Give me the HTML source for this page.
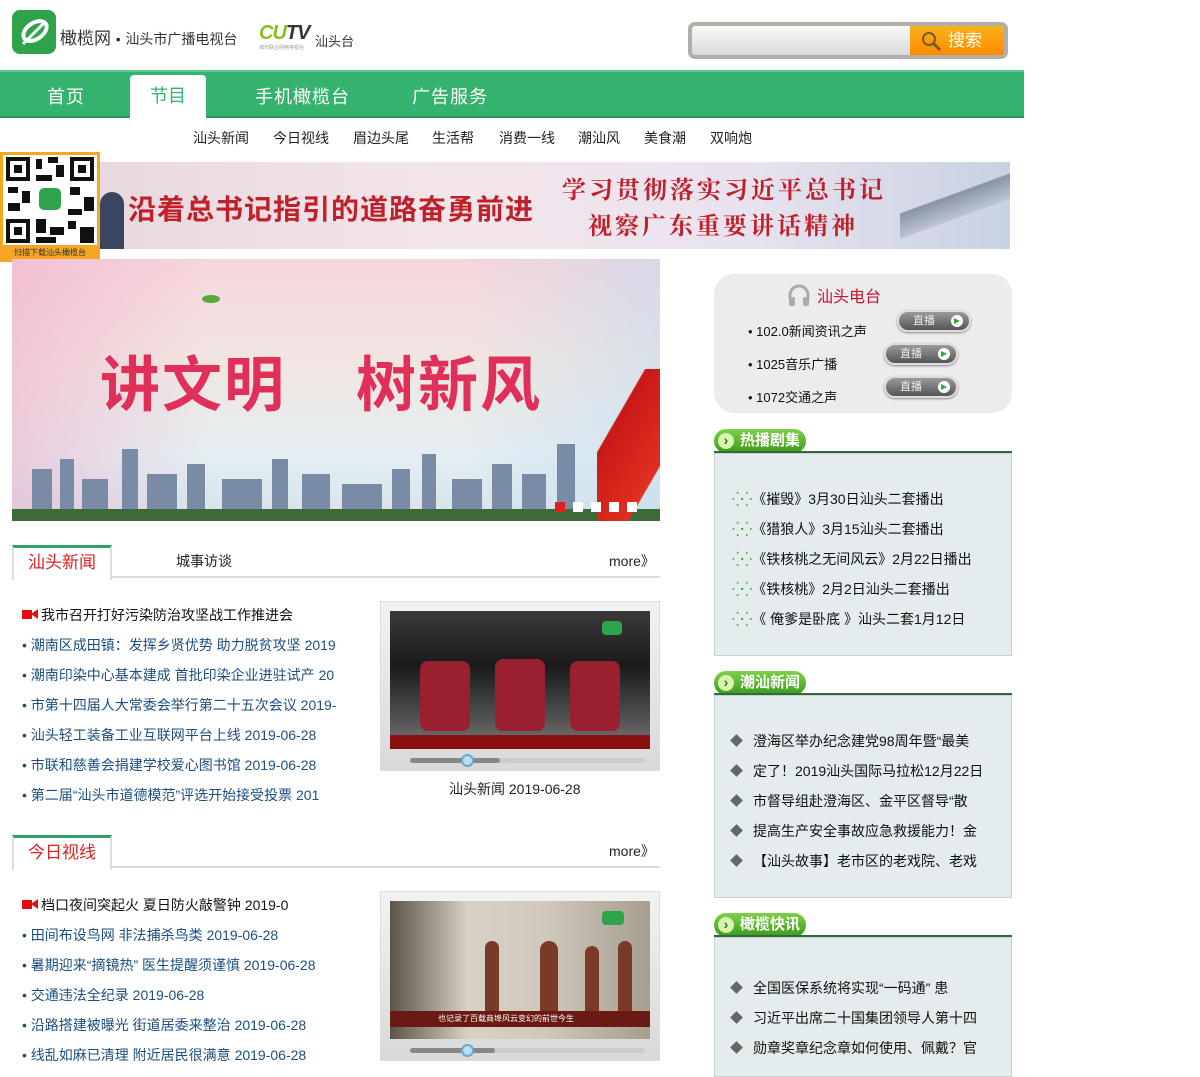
<!DOCTYPE html>
<html><head><meta charset="utf-8">
<style>
*{margin:0;padding:0;box-sizing:border-box}
body{width:1200px;height:1063px;overflow:hidden;background:#fff;font-family:"Liberation Sans","Noto Sans CJK SC",sans-serif;position:relative;color:#222}
.a{position:absolute}
.nav{left:0;top:70px;width:1024px;height:48px;background:#35b26c;border-top:2px solid #5cc58a;border-bottom:2px solid #2a9a58}
.nav span{position:absolute;top:11px;color:#fff;font-size:18px;letter-spacing:1px}
.sub span{position:absolute;top:128px;font-size:14px;color:#222}
.ll{font-size:14px;color:#1c4f80;white-space:nowrap;left:22px}
.rl{font-size:14px;color:#111;white-space:nowrap;left:732px}
.rl b{display:inline-block;width:9px;height:9px;background:#666;transform:rotate(45deg);margin-right:12px;vertical-align:1px}
.hd{height:24px;background:linear-gradient(#7fd04a,#3c9a1c);border-radius:12px;color:#fff;font-weight:bold;font-size:15px;padding-left:26px;line-height:24px;left:714px}
.hd:before{content:"›";position:absolute;left:4px;top:4px;width:16px;height:16px;border-radius:8px;background:#d8f5b0;color:#2a7a10;font-size:14px;line-height:15px;text-align:center}
.hl{left:714px;width:298px;height:2px;background:#2f6a3a}
.box{left:714px;width:298px;background:#e4eced;border:1px solid #c8d2d3}
.btn{width:74px;height:22px;border-radius:11px;background:linear-gradient(#9a9a9a,#555);border:2px solid #ddd;box-shadow:0 1px 2px #888;color:#eee;font-size:11px;line-height:18px;padding-left:14px}
.btn:after{content:"";position:absolute;right:6px;top:3px;width:12px;height:12px;border-radius:6px;background:#fff}
.btn i{position:absolute;right:9px;top:6px;border-left:6px solid #3a3;border-top:3px solid transparent;border-bottom:3px solid transparent;z-index:2}
.tabh{left:12px;width:648px;height:33px;border-bottom:2px solid #ddd}
.tab1{left:12px;width:100px;height:35px;border:2px solid #ddd;border-top:3px solid #2fa06a;border-bottom:none;background:#fff;color:#d22;font-size:17px;text-align:center;line-height:30px}
.vid{width:280px;height:170px;background:linear-gradient(#f2f2f2,#d9d9d9);border:1px solid #ddd}
.bar{height:5px;background:#888;border-radius:3px}
</style></head><body>
<div class="a" style="left:12px;top:10px;width:44px;height:44px;background:#2ea34a;border-radius:8px"></div>
<svg class="a" style="left:17px;top:16px" width="34" height="32"><ellipse cx="18" cy="15" rx="13" ry="8" transform="rotate(-35 18 15)" fill="none" stroke="#fff" stroke-width="4"/><path d="M6 28 L28 6" stroke="#fff" stroke-width="3"/></svg>
<div class="a" style="left:60px;top:24px;font-size:17px;color:#333">橄榄网 <span style="font-size:14px">•</span> <span style="font-size:14px;color:#333">汕头市广播电视台</span></div>
<div class="a" style="left:259px;top:22px;font-size:20px;font-weight:bold;font-style:italic;color:#8dbd1e;letter-spacing:-1px">CU<span style="color:#334">TV</span></div>
<div class="a" style="left:259px;top:44px;font-size:5px;color:#999">城市联合网络电视台</div>
<div class="a" style="left:315px;top:31px;font-size:13px;color:#333">汕头台</div>
<div class="a" style="left:688px;top:22px;width:320px;height:37px;border:4px solid #b3aea8;border-radius:7px;background:linear-gradient(#fafafa,#d9d9d9);overflow:hidden">
<div class="a" style="right:0;top:0;width:94px;height:29px;background:linear-gradient(#f9b21b,#ff8a00);color:#fff;font-size:17px;line-height:29px;padding-left:38px">搜索</div>
<svg class="a" style="right:60px;top:4px" width="24" height="22"><circle cx="9" cy="9" r="6" fill="none" stroke="#7a5a20" stroke-width="2"/><path d="M13 13 L20 20" stroke="#7a5a20" stroke-width="3"/></svg>
</div>
<div class="a nav"><span style="left:47px">首页</span><span style="left:255px">手机橄榄台</span><span style="left:412px">广告服务</span></div>
<div class="a" style="left:130px;top:75px;width:76px;height:46px;background:#fff;border-radius:4px 4px 0 0;color:#35b26c;font-size:18px;text-align:center;line-height:42px">节目</div>
<div class="sub"><span style="left:193px">汕头新闻</span><span style="left:273px">今日视线</span><span style="left:353px">眉边头尾</span><span style="left:432px">生活帮</span><span style="left:499px">消费一线</span><span style="left:578px">潮汕风</span><span style="left:644px">美食潮</span><span style="left:710px">双响炮</span></div>
<div class="a" style="left:100px;top:162px;width:910px;height:87px;background:linear-gradient(90deg,#e8d9e0,#f3e6ea 40%,#e9e3ef 70%,#c9d2e2);overflow:hidden">
<div class="a" style="left:0;top:30px;width:24px;height:57px;background:#3a4560;border-radius:12px 12px 0 0"></div>
<div class="a" style="left:28px;top:26px;font-size:28px;font-weight:bold;color:#c0202a;letter-spacing:1px">沿着总书记指引的道路奋勇前进</div>
<div class="a" style="left:462px;top:8px;font-size:24px;font-weight:bold;color:#c0202a;font-family:'Noto Serif CJK SC',serif;letter-spacing:3px">学习贯彻落实习近平总书记</div>
<div class="a" style="left:488px;top:44px;font-size:24px;font-weight:bold;color:#c0202a;font-family:'Noto Serif CJK SC',serif;letter-spacing:3px">视察广东重要讲话精神</div>
<div class="a" style="left:800px;top:0;width:110px;height:87px;background:linear-gradient(160deg,transparent 40%,#8a93a6 41%,#bcc4d3 60%,transparent 61%)"></div>
</div>
<div class="a" style="left:0;top:152px;width:100px;height:110px;background:#f5a623"></div>
<div class="a" style="left:3px;top:155px;width:94px;height:90px;background:#fff"></div>
<svg class="a" style="left:6px;top:157px" width="88" height="86"><g fill="#111"><rect x="0" y="0" width="24" height="24"/><rect x="64" y="0" width="24" height="24"/><rect x="0" y="62" width="24" height="24"/></g><g fill="#fff"><rect x="4" y="4" width="16" height="16"/><rect x="68" y="4" width="16" height="16"/><rect x="4" y="66" width="16" height="16"/></g><g fill="#111"><rect x="8" y="8" width="8" height="8"/><rect x="72" y="8" width="8" height="8"/><rect x="8" y="70" width="8" height="8"/><rect x="30" y="2" width="6" height="10"/><rect x="42" y="0" width="10" height="6"/><rect x="30" y="18" width="16" height="6"/><rect x="2" y="30" width="10" height="6"/><rect x="16" y="34" width="8" height="12"/><rect x="2" y="46" width="12" height="8"/><rect x="64" y="30" width="10" height="8"/><rect x="78" y="40" width="10" height="14"/><rect x="62" y="52" width="14" height="6"/><rect x="30" y="62" width="10" height="14"/><rect x="44" y="70" width="14" height="8"/><rect x="62" y="64" width="8" height="8"/><rect x="74" y="70" width="14" height="16"/><rect x="50" y="8" width="8" height="12"/><rect x="30" y="80" width="20" height="6"/></g><rect x="33" y="31" width="22" height="22" rx="5" fill="#2ea34a"/></svg>
<div class="a" style="left:0;top:247px;width:100px;font-size:8px;color:#333;text-align:center">扫描下载汕头橄榄台</div>
<div class="a" style="left:80px;top:262px;width:20px;height:9px;border:1px solid #ccc;font-size:7px;color:#666;background:#fff;text-align:center;line-height:7px">关闭</div>
<div class="a" style="left:12px;top:259px;width:648px;height:262px;background:linear-gradient(180deg,#f6d5dc 0%,#f1e6e2 40%,#e4eef2 75%,#d7e3ea 100%);overflow:hidden">
<div class="a" style="left:0;top:0;width:648px;height:262px;background:linear-gradient(90deg,rgba(240,170,200,.5),transparent 30%,transparent 70%,rgba(190,220,240,.5))"></div>
<div class="a" style="left:88px;top:78px;font-size:60px;font-weight:bold;color:#e0305a;letter-spacing:2px">讲文明</div>
<div class="a" style="left:344px;top:78px;font-size:60px;font-weight:bold;color:#e0305a;letter-spacing:2px">树新风</div>
<div class="a" style="left:190px;top:36px;width:18px;height:8px;background:#5aa83a;border-radius:50%"></div>
<svg class="a" style="left:0;top:170px" width="648" height="92"><g fill="#7a8ba6"><rect x="20" y="40" width="20" height="52"/><rect x="48" y="30" width="14" height="62"/><rect x="70" y="50" width="26" height="42"/><rect x="110" y="20" width="16" height="72"/><rect x="135" y="45" width="30" height="47"/><rect x="175" y="35" width="18" height="57"/><rect x="210" y="50" width="40" height="42"/><rect x="260" y="30" width="16" height="62"/><rect x="290" y="45" width="28" height="47"/><rect x="330" y="55" width="40" height="37"/><rect x="380" y="40" width="18" height="52"/><rect x="410" y="25" width="14" height="67"/><rect x="440" y="50" width="30" height="42"/><rect x="480" y="35" width="20" height="57"/><rect x="510" y="45" width="24" height="47"/><rect x="545" y="15" width="18" height="77"/></g><rect x="0" y="80" width="648" height="12" fill="#3c6a3a"/></svg>
<div class="a" style="left:585px;top:110px;width:70px;height:152px;background:linear-gradient(120deg,transparent 30%,#c81818 31%,#e03020 75%,transparent 76%);border-radius:50% 0 0 0"></div>
<div class="a" style="left:543px;top:243px;width:10px;height:10px;background:#e02020"></div>
<div class="a" style="left:561px;top:243px;width:10px;height:10px;background:#fff"></div>
<div class="a" style="left:579px;top:243px;width:10px;height:10px;background:#fff"></div>
<div class="a" style="left:597px;top:243px;width:10px;height:10px;background:#fff"></div>
<div class="a" style="left:615px;top:243px;width:10px;height:10px;background:#fff"></div>
</div>
<div class="a" style="left:714px;top:274px;width:298px;height:139px;background:#ececec;border-radius:20px"></div>
<svg class="a" style="left:787px;top:283px" width="24" height="24"><path d="M3 16 V12 A9 9 0 0 1 21 12 V16" fill="none" stroke="#aaa" stroke-width="3"/><rect x="2" y="14" width="6" height="9" rx="2" fill="#aaa"/><rect x="16" y="14" width="6" height="9" rx="2" fill="#aaa"/></svg>
<div class="a" style="left:817px;top:283px;font-size:16px;color:#c8102e">汕头电台</div>
<div class="a" style="left:748px;top:321px;font-size:13px;color:#111">• 102.0新闻资讯之声</div>
<div class="a" style="left:748px;top:354px;font-size:13px;color:#111">• 1025音乐广播</div>
<div class="a" style="left:748px;top:387px;font-size:13px;color:#111">• 1072交通之声</div>
<div class="a btn" style="left:897px;top:310px">直播<i></i></div>
<div class="a btn" style="left:884px;top:343px">直播<i></i></div>
<div class="a btn" style="left:884px;top:376px">直播<i></i></div>
<div class="a hd" style="top:429px;width:92px">热播剧集</div><div class="a hl" style="top:451px"></div>
<div class="a box" style="top:453px;height:203px"></div>
<div class="a rl" style="top:489px"><span style="color:#3a3;letter-spacing:-2px">⁛⁛ </span>《摧毁》3月30日汕头二套播出</div>
<div class="a rl" style="top:519px"><span style="color:#3a3;letter-spacing:-2px">⁛⁛ </span>《猎狼人》3月15汕头二套播出</div>
<div class="a rl" style="top:549px"><span style="color:#3a3;letter-spacing:-2px">⁛⁛ </span>《铁核桃之无间风云》2月22日播出</div>
<div class="a rl" style="top:579px"><span style="color:#3a3;letter-spacing:-2px">⁛⁛ </span>《铁核桃》2月2日汕头二套播出</div>
<div class="a rl" style="top:609px"><span style="color:#3a3;letter-spacing:-2px">⁛⁛ </span>《 俺爹是卧底 》汕头二套1月12日</div>
<div class="a hd" style="top:671px;width:92px">潮汕新闻</div><div class="a hl" style="top:693px"></div>
<div class="a box" style="top:695px;height:203px"></div>
<div class="a rl" style="top:731px"><b></b>澄海区举办纪念建党98周年暨“最美</div>
<div class="a rl" style="top:761px"><b></b>定了！2019汕头国际马拉松12月22日</div>
<div class="a rl" style="top:791px"><b></b>市督导组赴澄海区、金平区督导“散</div>
<div class="a rl" style="top:821px"><b></b>提高生产安全事故应急救援能力！金</div>
<div class="a rl" style="top:851px"><b></b>【汕头故事】老市区的老戏院、老戏</div>
<div class="a hd" style="top:913px;width:92px">橄榄快讯</div><div class="a hl" style="top:935px"></div>
<div class="a box" style="top:937px;height:140px"></div>
<div class="a rl" style="top:978px"><b></b>全国医保系统将实现“一码通” 患</div>
<div class="a rl" style="top:1008px"><b></b>习近平出席二十国集团领导人第十四</div>
<div class="a rl" style="top:1038px"><b></b>勋章奖章纪念章如何使用、佩戴？官</div>
<div class="a tabh" style="top:545px"></div>
<div class="a tab1" style="top:545px">汕头新闻</div>
<div class="a" style="left:176px;top:551px;font-size:14px;color:#222">城事访谈</div>
<div class="a" style="left:609px;top:551px;font-size:14px;color:#222">more》</div>
<div class="a" style="left:22px;top:610px;width:10px;height:9px;background:#e01010"></div><div class="a" style="left:31px;top:609px;border-right:7px solid #e01010;border-top:5px solid transparent;border-bottom:5px solid transparent"></div>
<div class="a" style="left:41px;top:605px;font-size:14px;color:#111">我市召开打好污染防治攻坚战工作推进会</div>
<div class="a ll" style="top:635px">• 潮南区成田镇：发挥乡贤优势 助力脱贫攻坚 2019</div>
<div class="a ll" style="top:665px">• 潮南印染中心基本建成 首批印染企业进驻试产 20</div>
<div class="a ll" style="top:695px">• 市第十四届人大常委会举行第二十五次会议 2019-</div>
<div class="a ll" style="top:725px">• 汕头轻工装备工业互联网平台上线 2019-06-28</div>
<div class="a ll" style="top:755px">• 市联和慈善会捐建学校爱心图书馆 2019-06-28</div>
<div class="a ll" style="top:785px">• 第二届“汕头市道德模范”评选开始接受投票 201</div>
<div class="a vid" style="left:380px;top:601px"></div>
<div class="a" style="left:390px;top:611px;width:260px;height:138px;background:linear-gradient(#3a3a3a,#1a1a1a 40%,#555 80%,#777);overflow:hidden">
<div class="a" style="left:30px;top:50px;width:50px;height:70px;background:#9a2030;border-radius:8px"></div>
<div class="a" style="left:105px;top:48px;width:50px;height:72px;background:#9a2030;border-radius:8px"></div>
<div class="a" style="left:180px;top:50px;width:50px;height:70px;background:#9a2030;border-radius:8px"></div>
<div class="a" style="left:0;top:124px;width:260px;height:14px;background:#8a1010"></div>
<div class="a" style="left:212px;top:10px;width:20px;height:14px;background:#2ea34a;border-radius:4px"></div>
</div>
<div class="a bar" style="left:410px;top:758px;width:235px;background:#ccc"></div>
<div class="a bar" style="left:410px;top:758px;width:90px"></div>
<div class="a" style="left:461px;top:754px;width:13px;height:13px;border-radius:7px;background:#bde;border:2px solid #6ac"></div>
<div class="a" style="left:449px;top:779px;font-size:14px;color:#222">汕头新闻 2019-06-28</div>
<div class="a tabh" style="top:835px"></div>
<div class="a tab1" style="top:835px">今日视线</div>
<div class="a" style="left:609px;top:841px;font-size:14px;color:#222">more》</div>
<div class="a" style="left:22px;top:900px;width:10px;height:9px;background:#e01010"></div><div class="a" style="left:31px;top:899px;border-right:7px solid #e01010;border-top:5px solid transparent;border-bottom:5px solid transparent"></div>
<div class="a" style="left:41px;top:895px;font-size:14px;color:#111">档口夜间突起火 夏日防火敲警钟 2019-0</div>
<div class="a ll" style="top:925px">• 田间布设鸟网 非法捕杀鸟类 2019-06-28</div>
<div class="a ll" style="top:955px">• 暑期迎来“摘镜热” 医生提醒须谨慎 2019-06-28</div>
<div class="a ll" style="top:985px">• 交通违法全纪录 2019-06-28</div>
<div class="a ll" style="top:1015px">• 沿路搭建被曝光 街道居委来整治 2019-06-28</div>
<div class="a ll" style="top:1045px">• 线乱如麻已清理 附近居民很满意 2019-06-28</div>
<div class="a vid" style="left:380px;top:891px"></div>
<div class="a" style="left:390px;top:901px;width:260px;height:138px;background:linear-gradient(90deg,#5a5448,#d8d2c6 30%,#cfc8bb 60%,#a69e8f);overflow:hidden">
<div class="a" style="left:95px;top:40px;width:14px;height:70px;background:#7a3a28;border-radius:7px 7px 0 0"></div>
<div class="a" style="left:150px;top:40px;width:18px;height:75px;background:#7a3a28;border-radius:9px 9px 0 0"></div>
<div class="a" style="left:195px;top:45px;width:14px;height:70px;background:#7a3a28;border-radius:7px 7px 0 0"></div>
<div class="a" style="left:228px;top:40px;width:14px;height:70px;background:#7a3a28;border-radius:7px 7px 0 0"></div>
<div class="a" style="left:0;top:110px;width:260px;height:16px;background:#6a1a12;color:#fff;font-size:8px;padding-left:48px;line-height:16px">也记录了百载商埠风云变幻的前世今生</div>
<div class="a" style="left:212px;top:10px;width:22px;height:14px;background:#2ea34a;border-radius:4px"></div>
</div>
<div class="a bar" style="left:410px;top:1048px;width:235px;background:#ccc"></div>
<div class="a bar" style="left:410px;top:1048px;width:85px"></div>
<div class="a" style="left:461px;top:1044px;width:13px;height:13px;border-radius:7px;background:#bde;border:2px solid #6ac"></div>
</body></html>
